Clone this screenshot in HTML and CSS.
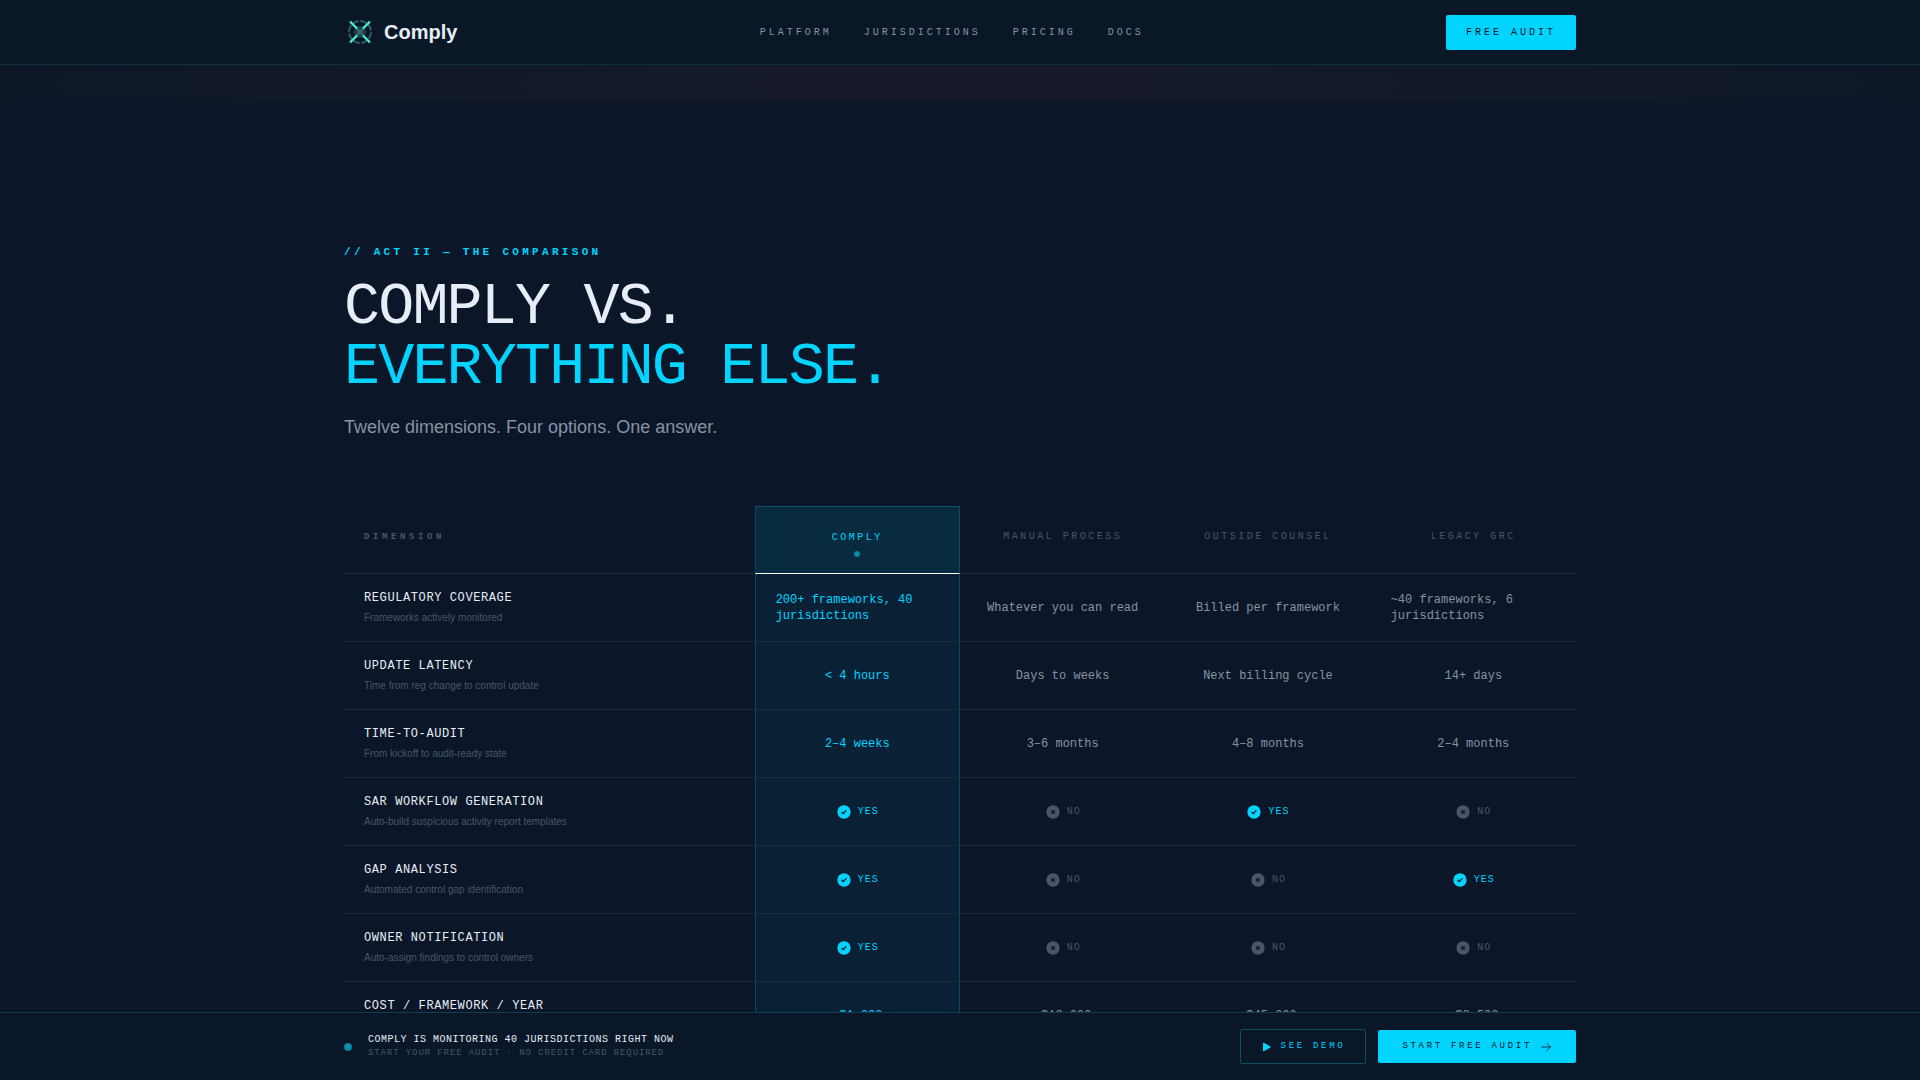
FILE: index.html
```html
<!DOCTYPE html>
<html lang="en">
<head>
  <meta charset="UTF-8">
  <meta name="viewport" content="width=device-width, initial-scale=1.0">
  <title>Comply vs. Everything Else</title>
  <link rel="stylesheet" href="styles.css">
</head>
<body>
  <!-- shared icons -->
  <svg class="sprite" aria-hidden="true">
    <symbol id="icon-yes" viewBox="0 0 24 24">
      <circle cx="12" cy="12" r="10" fill="#00d4ff"/>
      <path d="M9 12.5l2 2 4-4.5" fill="none" stroke="#0b1728" stroke-width="2" stroke-linecap="round" stroke-linejoin="round"/>
    </symbol>
    <symbol id="icon-no" viewBox="0 0 24 24">
      <circle cx="12" cy="12" r="10" fill="#4a5568"/>
      <path d="M10 10l4 4M14 10l-4 4" fill="none" stroke="#0b1728" stroke-width="2" stroke-linecap="round"/>
    </symbol>
  </svg>

  <header class="nav">
    <div class="container nav-inner">
      <a href="#" class="logo">
        <svg class="logo-mark" viewBox="0 0 32 32" aria-hidden="true">
          <circle cx="16" cy="16" r="11" fill="none" stroke="#2b5f68" stroke-width="2" stroke-dasharray="7 1.6"/>
          <circle cx="16" cy="16" r="6" fill="#1c3e48"/>
          <path d="M12 12l8 8M20 12l-8 8" stroke="#3c6a70" stroke-width="2"/>
          <path d="M6 5.5l7 7M26 5.5l-7 7M6 26.5l7-7M26 26.5l-7-7" stroke="#4fe3d6" stroke-width="2.4"/>
        </svg>
        <span>Comply</span>
      </a>
      <nav class="nav-links">
        <a href="#">PLATFORM</a>
        <a href="#">JURISDICTIONS</a>
        <a href="#">PRICING</a>
        <a href="#">DOCS</a>
      </nav>
      <button class="btn btn-nav">FREE AUDIT</button>
    </div>
  </header>

  <div class="glow-band"></div>

  <main class="container comparison">
    <p class="eyebrow">// ACT II — THE COMPARISON</p>
    <h1>COMPLY VS.<br><span class="accent">EVERYTHING ELSE.</span></h1>
    <p class="lead">Twelve dimensions. Four options. One answer.</p>

    <table>
      <thead>
        <tr>
          <th scope="col" class="dimension">DIMENSION</th>
          <th scope="col" class="comply">COMPLY<span class="dot"></span></th>
          <th scope="col">MANUAL PROCESS</th>
          <th scope="col">OUTSIDE COUNSEL</th>
          <th scope="col">LEGACY GRC</th>
        </tr>
      </thead>
      <tbody>
        <tr>
          <th scope="row">REGULATORY COVERAGE<small>Frameworks actively monitored</small></th>
          <td class="comply"><div class="value">200+ frameworks, 40 jurisdictions</div></td>
          <td><div class="value">Whatever you can read</div></td>
          <td><div class="value">Billed per framework</div></td>
          <td><div class="value">~40 frameworks, 6 jurisdictions</div></td>
        </tr>
        <tr>
          <th scope="row">UPDATE LATENCY<small>Time from reg change to control update</small></th>
          <td class="comply"><div class="value">&lt; 4 hours</div></td>
          <td><div class="value">Days to weeks</div></td>
          <td><div class="value">Next billing cycle</div></td>
          <td><div class="value">14+ days</div></td>
        </tr>
        <tr>
          <th scope="row">TIME-TO-AUDIT<small>From kickoff to audit-ready state</small></th>
          <td class="comply"><div class="value">2–4 weeks</div></td>
          <td><div class="value">3–6 months</div></td>
          <td><div class="value">4–8 months</div></td>
          <td><div class="value">2–4 months</div></td>
        </tr>
        <tr>
          <th scope="row">SAR WORKFLOW GENERATION<small>Auto-build suspicious activity report templates</small></th>
          <td class="comply"><div class="value flag yes"><svg><use href="#icon-yes"/></svg>YES</div></td>
          <td><div class="value flag no"><svg><use href="#icon-no"/></svg>NO</div></td>
          <td><div class="value flag yes"><svg><use href="#icon-yes"/></svg>YES</div></td>
          <td><div class="value flag no"><svg><use href="#icon-no"/></svg>NO</div></td>
        </tr>
        <tr>
          <th scope="row">GAP ANALYSIS<small>Automated control gap identification</small></th>
          <td class="comply"><div class="value flag yes"><svg><use href="#icon-yes"/></svg>YES</div></td>
          <td><div class="value flag no"><svg><use href="#icon-no"/></svg>NO</div></td>
          <td><div class="value flag no"><svg><use href="#icon-no"/></svg>NO</div></td>
          <td><div class="value flag yes"><svg><use href="#icon-yes"/></svg>YES</div></td>
        </tr>
        <tr>
          <th scope="row">OWNER NOTIFICATION<small>Auto-assign findings to control owners</small></th>
          <td class="comply"><div class="value flag yes"><svg><use href="#icon-yes"/></svg>YES</div></td>
          <td><div class="value flag no"><svg><use href="#icon-no"/></svg>NO</div></td>
          <td><div class="value flag no"><svg><use href="#icon-no"/></svg>NO</div></td>
          <td><div class="value flag no"><svg><use href="#icon-no"/></svg>NO</div></td>
        </tr>
        <tr>
          <th scope="row">COST / FRAMEWORK / YEAR<small>All-in annual cost</small></th>
          <td class="comply"><div class="value">~$1,200</div></td>
          <td><div class="value">~$18,000</div></td>
          <td><div class="value">~$45,000</div></td>
          <td><div class="value">~$8,500</div></td>
        </tr>
      </tbody>
    </table>
  </main>

  <div class="cta-bar">
    <div class="container cta-inner">
      <span class="dot dot-lg"></span>
      <div class="cta-text">
        <p>COMPLY IS MONITORING 40 JURISDICTIONS RIGHT NOW</p>
        <p class="cta-note">START YOUR FREE AUDIT · NO CREDIT CARD REQUIRED</p>
      </div>
      <button class="btn btn-cta btn-outline">
        <svg viewBox="0 0 12 12" aria-hidden="true"><path d="M2 2.3v7.4a.6.6 0 0 0 .9.5l6.500-3.700a.6.6 0 0 0 0-1l-6.500-3.700a.6.6 0 0 0-.9.5z" fill="currentColor"/></svg>
        SEE DEMO
      </button>
      <button class="btn btn-cta">
        START FREE AUDIT
        <svg viewBox="0 0 12 12" aria-hidden="true"><path d="M1.5 6h9M7 2.5L10.5 6 7 9.5" fill="none" stroke="currentColor" stroke-width="0.8" stroke-linecap="round" stroke-linejoin="round"/></svg>
      </button>
    </div>
  </div>
</body>
</html>
```
FILE: styles.css
```css
* {
  box-sizing: border-box;
}
body {
  margin: 0;
  padding-bottom: 68px;
  background-color: #0b1728;
  color: #e8edf5;
  font-family: "Liberation Sans", Arial, sans-serif;
}
p, h1 {
  margin: 0;
}
a {
  color: inherit;
  text-decoration: none;
}
.sprite {
  display: none;
}
.container {
  max-width: 1280px;
  margin: 0 auto;
  padding: 0 24px;
}

/* top nav */
.nav {
  position: sticky;
  top: 0;
  z-index: 10;
  background-color: #091727;
  border-bottom: 1px solid #10303d;
}
.nav-inner {
  display: flex;
  align-items: center;
  justify-content: space-between;
  height: 64px;
}
.logo {
  display: flex;
  align-items: center;
  gap: 8px;
  font-size: 20px;
  font-weight: bold;
}
.logo-mark {
  width: 32px;
  height: 32px;
}
.nav-links {
  display: flex;
  gap: 32px;
  color: #8892a4;
  font-family: "Liberation Mono", monospace;
  font-size: 10px;
  letter-spacing: 0.3em;
}
.btn {
  border: none;
  border-radius: 2px;
  background-color: #00d4ff;
  color: #0a1628;
  font-family: "Liberation Mono", monospace;
  cursor: pointer;
}
.btn:hover {
  opacity: 0.9;
}
.btn-nav {
  padding: 10px 20px;
  font-size: 10px;
  line-height: 15px;
  letter-spacing: 0.3em;
}

.glow-band {
  height: 36px;
  background: radial-gradient(ellipse 65% 400% at 50% 50%, #16192b, #0b1728);
}

/* comparison section */
.comparison {
  padding-top: 143px;
}
.eyebrow {
  margin-bottom: 17px;
  color: #00d4ff;
  font-family: "Liberation Mono", monospace;
  font-size: 11px;
  font-weight: bold;
  line-height: 16px;
  letter-spacing: 0.3em;
}
h1 {
  margin-bottom: 16px;
  font-family: "Liberation Mono", monospace;
  font-size: 60px;
  font-weight: normal;
  line-height: 60px;
  letter-spacing: -0.03em;
}
.accent {
  color: #00d4ff;
}
.lead {
  margin-bottom: 65px;
  color: #8892a4;
  font-size: 18px;
  line-height: 28px;
}

table {
  width: 100%;
  table-layout: fixed;
  border-collapse: separate;
  border-spacing: 0;
  font-family: "Liberation Mono", monospace;
}
tr {
  height: 68px;
}
th, td {
  padding: 0 20px;
  border-bottom: 1px solid #1b2839;
  font-weight: normal;
}
thead th {
  padding-bottom: 5px;
  color: #4a5568;
  font-size: 10px;
  line-height: 16px;
  letter-spacing: 0.25em;
}
thead .dimension {
  width: 33.3333%;
  font-size: 9px;
  font-weight: bold;
  letter-spacing: 0.4em;
  text-align: left;
}
thead .comply {
  padding-top: 12px;
  padding-bottom: 0;
  background-color: #092b3f;
  border-top: 1px solid #0a5468;
  border-bottom-color: #fff;
  color: #00d4ff;
}
.comply {
  background-color: #0a2135;
  border-left: 1px solid #0b4a5e;
  border-right: 1px solid #0b4a5e;
  border-bottom-color: #172d40;
  color: #00d4ff;
}
.dot {
  display: block;
  width: 6px;
  height: 6px;
  border-radius: 50%;
  background: radial-gradient(#089fc0, #0a6f88);
}
.comply .dot {
  margin: 5px auto;
}
tbody th {
  font-size: 12px;
  line-height: 18px;
  letter-spacing: 0.05em;
  text-align: left;
}
tbody small {
  display: block;
  margin-top: 3px;
  color: #4a5568;
  font-family: "Liberation Sans", Arial, sans-serif;
  font-size: 10px;
  line-height: 16px;
  letter-spacing: normal;
}
td {
  color: #8892a4;
}
.value {
  display: flex;
  align-items: center;
  justify-content: center;
  font-size: 12px;
  line-height: 16px;
}
.flag {
  gap: 6px;
  font-size: 10px;
  letter-spacing: 0.1em;
}
.flag svg {
  width: 16px;
  height: 16px;
}
.comply .value,
.yes {
  color: #00d4ff;
}
.no {
  color: #4a5568;
}

/* bottom bar */
.cta-bar {
  position: fixed;
  right: 0;
  bottom: 0;
  left: 0;
  background-color: #091729;
  border-top: 1px solid #0b4052;
}
.cta-inner {
  display: flex;
  align-items: center;
  gap: 12px;
  padding-top: 16px;
  padding-bottom: 16px;
  font-family: "Liberation Mono", monospace;
}
.dot-lg {
  width: 8px;
  height: 8px;
}
.cta-text {
  margin-left: 4px;
  margin-right: auto;
  font-size: 10px;
  line-height: 14px;
  letter-spacing: 0.05em;
}
.cta-note {
  color: #4a5568;
  font-size: 9px;
  line-height: 13px;
  letter-spacing: 0.1em;
}
.btn-cta {
  display: flex;
  align-items: center;
  gap: 8px;
  padding: 10px 24px;
  font-size: 9px;
  line-height: 13px;
  letter-spacing: 0.3em;
}
.btn-cta svg {
  width: 12px;
  height: 12px;
}
.btn-outline {
  padding: 10px 20px;
  border: 1px solid #0b5062;
  background-color: transparent;
  color: #00d4ff;
}
```
